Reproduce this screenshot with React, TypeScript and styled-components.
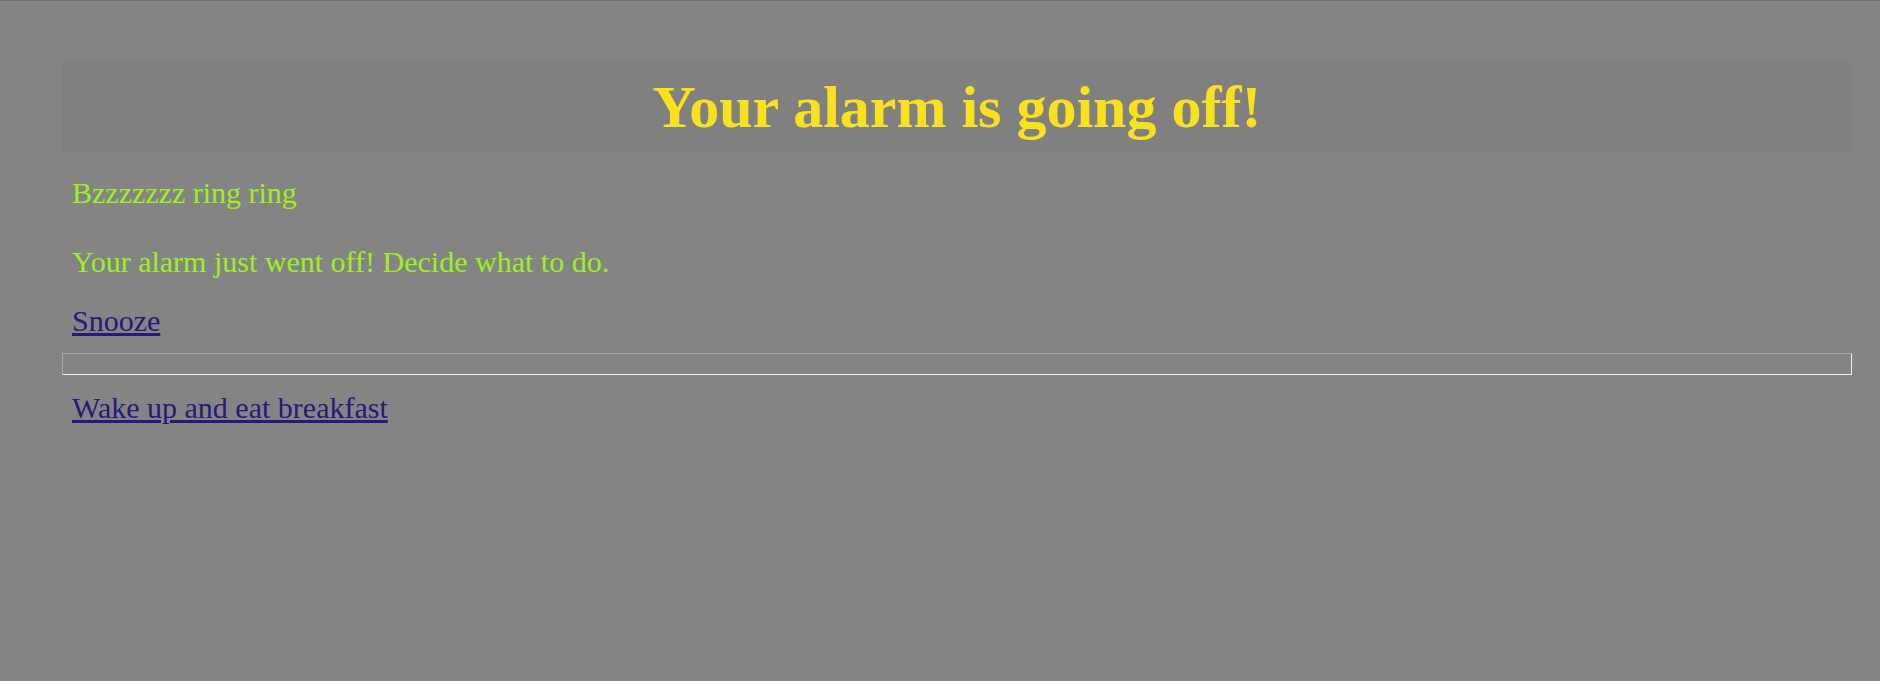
import React from "react";
import styled, { createGlobalStyle } from "styled-components";

const GlobalStyle = createGlobalStyle`
  html, body {
    margin: 0;
    padding: 0;
    background: #848484;
    font-family: "Liberation Serif", "Times New Roman", serif;
  }
`;

const Page = styled.main`
  display: flex;
  flex-direction: column;
  min-height: 680px;
  border-top: 1px solid #6e6e6e;
  padding: 61px 28px 0 62px;
  box-sizing: border-box;
`;

const Header = styled.header`
  background: #808080;
  padding: 11px 10px 9px;
  text-align: center;
`;

const Title = styled.h1`
  margin: 0;
  font-size: 60px;
  line-height: 69px;
  font-weight: 700;
  color: #fae11d;
`;

const Message = styled.p<{ $gap: number }>`
  margin: ${(p) => p.$gap}px 0 0;
  padding: 0 10px;
  font-size: 30px;
  line-height: 34px;
  color: #9df01e;
`;

const Choice = styled.p<{ $gap: number }>`
  margin: ${(p) => p.$gap}px 0 0;
  padding: 0 10px;
  font-size: 30px;
  line-height: 34px;
`;

const ChoiceLink = styled.a`
  color: #2a1878;
  text-decoration: underline;
`;

const Divider = styled.div`
  margin-top: 15px;
  height: 20px;
  border-style: solid;
  border-width: 1px;
  border-color: #a8a8a8 #eeeeee #eeeeee #a8a8a8;
`;

export default function App() {
  return (
    <>
      <GlobalStyle />
      <Page>
        <Header>
          <Title>Your alarm is going off!</Title>
        </Header>
        <Message $gap={25}>Bzzzzzzz ring ring</Message>
        <Message $gap={35}>Your alarm just went off! Decide what to do.</Message>
        <Choice $gap={25}>
          <ChoiceLink href="#snooze">Snooze</ChoiceLink>
        </Choice>
        <Divider />
        <Choice $gap={16}>
          <ChoiceLink href="#breakfast">Wake up and eat breakfast</ChoiceLink>
        </Choice>
      </Page>
    </>
  );
}
